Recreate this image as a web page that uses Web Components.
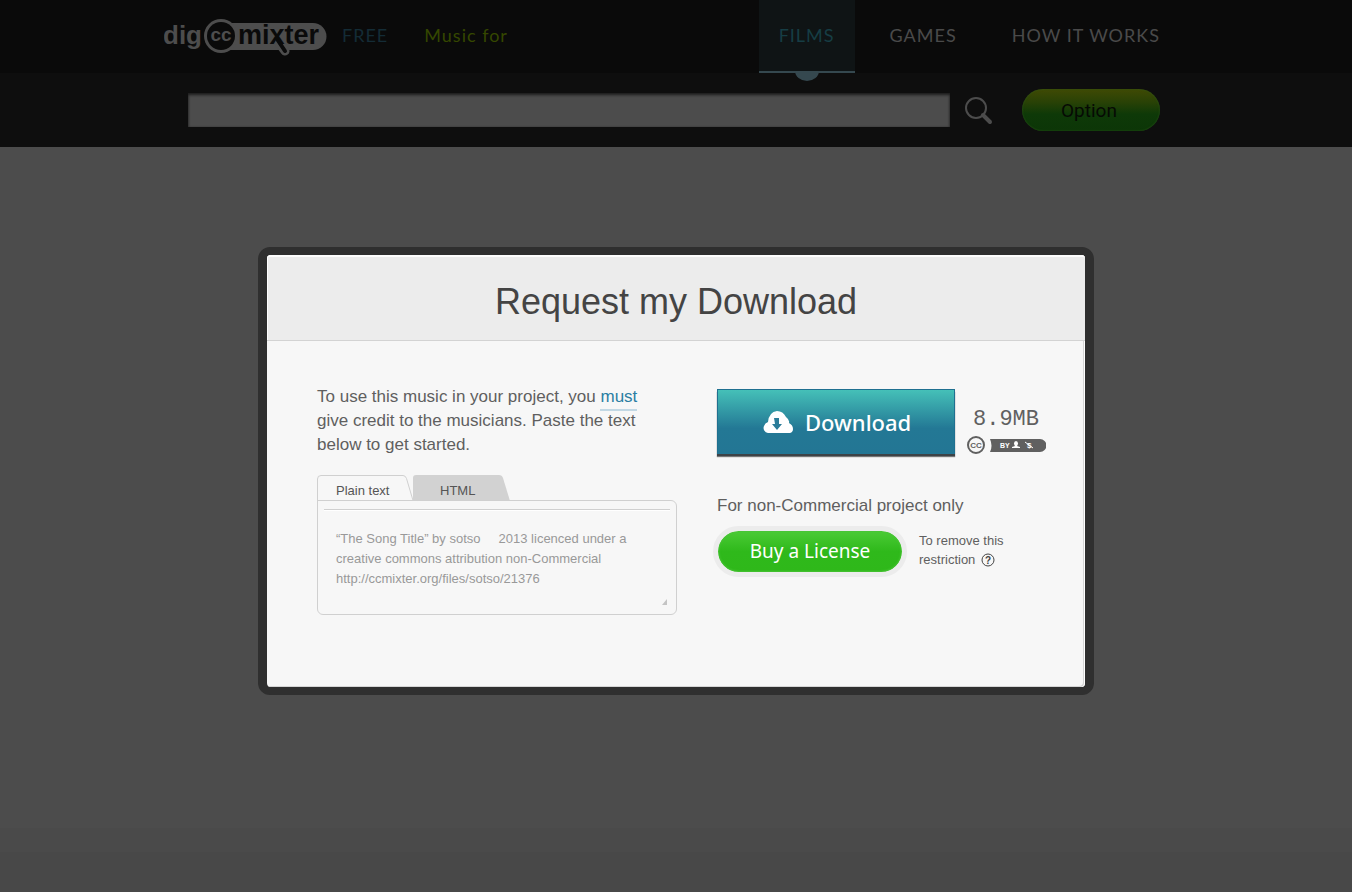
<!DOCTYPE html>
<html lang="en">
<head>
<meta charset="utf-8">
<meta name="viewport" content="width=device-width, initial-scale=1">
<title>dig ccMixter</title>
<style>
html,body{margin:0}
body{min-height:100vh;display:flex;flex-direction:column;background:#4c4c4c;color:#5f5f5f;font-family:"Liberation Sans",Arial,sans-serif}
main{flex:1;display:flex;flex-direction:column;align-items:center;padding:100px 16px 0}
</style>
</head>
<body>
<site-header>
  <site-logo slot="brand"></site-logo>
  <span slot="free">FREE</span>
  <span slot="purpose">Music for</span>
  <nav-item slot="nav" href="#films" active>FILMS</nav-item>
  <nav-item slot="nav" href="#games">GAMES</nav-item>
  <nav-item slot="nav" href="#how">HOW IT WORKS</nav-item>
</site-header>
<search-bar></search-bar>
<main>
  <modal-card>
    <span slot="title">Request my Download</span>
    <credit-panel slot="left"></credit-panel>
    <download-panel slot="right"></download-panel>
  </modal-card>
</main>
<site-footer></site-footer>
<script>
const define=(name,html,setup)=>{
  const t=document.createElement('template');
  t.innerHTML=html;
  customElements.define(name,class extends HTMLElement{
    constructor(){super();this.attachShadow({mode:'open'}).append(t.content.cloneNode(true));}
    connectedCallback(){if(setup)setup(this,this.shadowRoot);}
  });
};

define('site-logo',`<style>
:host{display:block;width:163px;height:38px;letter-spacing:normal}
a{display:block}svg{display:block}
text{font-family:"Liberation Sans",Arial,sans-serif;font-weight:700}
</style>
<a href="#home" aria-label="dig ccMixter"><svg width="163" height="38" viewBox="0 0 163 38">
<path d="M56 5H149a13 13 0 0 1 0 27H56z" fill="#4d4d4d"/>
<circle cx="57" cy="18" r="17" fill="#4d4d4d"/><circle cx="57" cy="18" r="14" fill="#0a0a0a"/>
<path d="M115 25l6 8" stroke="#4d4d4d" stroke-width="9" stroke-linecap="round"/>
<path d="M113 21l8 12" stroke="#0a0a0a" stroke-width="4" stroke-linecap="round"/>
<text x="-1" y="26" font-size="26" fill="#4d4d4d">dig</text>
<text x="57" y="23" font-size="19" text-anchor="middle" fill="#4d4d4d">cc</text>
<text x="74" y="26" font-size="27" fill="#0a0a0a">mixter</text>
</svg></a>`);

define('nav-item',`<style>
:host{display:block;font:18px/24px Lato,sans-serif;letter-spacing:1px}
a{position:relative;box-sizing:border-box;display:block;height:73px;padding:23px 20px 0;color:#4a4a4a;text-decoration:none}
:host([active]) a{background:#0f1415;border-bottom:2px solid #35484f;color:#163d44}
:host([active]) a::after{content:"";position:absolute;left:50%;top:71px;width:24px;height:10px;margin-left:-12px;background:#35484f;border-radius:0 0 12px 12px/0 0 10px 10px}
</style><a><slot></slot></a>`,(h,r)=>{r.querySelector('a').href=h.getAttribute('href');if(h.hasAttribute('active'))r.querySelector('a').setAttribute('aria-current','page')});

define('site-header',`<style>
:host{display:block;background:#0a0a0a;font:18px/24px Lato,sans-serif;letter-spacing:1px}
header{box-sizing:border-box;max-width:1024px;height:73px;margin:auto;padding-right:8px;display:flex;align-items:flex-start}
.brand{padding-top:18px;margin-right:15px}
.free{padding-top:23px;color:#142c36;margin-right:36px}
.purpose{padding-top:23px;color:#354700}
nav{display:flex;gap:15px;margin-left:auto}
</style><header><div class="brand"><slot name="brand"></slot></div><div class="free"><slot name="free"></slot></div><div class="purpose"><slot name="purpose"></slot></div><nav><slot name="nav"></slot></nav></header>`);

define('search-bar',`<style>
:host{display:block;background:#0e0e0e}
form{box-sizing:border-box;max-width:1024px;height:74px;margin:auto;padding:16px 28px 0 24px;display:flex;align-items:flex-start}
.field{flex:1;min-width:0;box-sizing:border-box;height:34px;margin-top:4px;padding:0 10px;border:0;background:#4c4c4c;box-shadow:inset 0 2px 3px #1c1c1c,inset 0 0 2px #333;color:#111;font:18px "Liberation Sans",sans-serif}
.go{margin:6px 28px 0 14px;padding:0;width:30px;height:30px;border:0;background:none}
.go svg{display:block}
.option{width:138px;height:42px;border:0;border-radius:21px;padding:0 4px 0 0;background:linear-gradient(#404a04,#2a4206 30%,#0e3908 60%,#0c3607);box-shadow:inset 0 0 2px #2c5a1a;color:#060a04;font:19px Roboto,"Liberation Sans",sans-serif}
</style><form role="search"><input class="field" type="search" aria-label="Search music">
<button class="go" type="button" aria-label="Search"><svg width="30" height="30" viewBox="0 0 30 30" fill="none" stroke="#4c4c4c"><circle cx="12" cy="13" r="10" stroke-width="2"/><path d="M19 20l7 7" stroke-width="4" stroke-linecap="round"/></svg></button>
<button class="option" type="button">Option</button></form>`);

define('modal-card',`<style>
:host{display:block;box-sizing:border-box;width:100%;max-width:836px;border:solid #2f2f2f;border-width:8px 9px;border-radius:12px;background:#2f2f2f}
section{box-sizing:border-box;min-height:432px;background:#f7f7f7;border-radius:4px;box-shadow:inset -1px 0 #fff,inset -2px -1px #d5d5d5;overflow:hidden}
h2{margin:0;box-sizing:border-box;height:86px;padding-top:26px;background:#ececec;border-bottom:1px solid #d3d3d3;box-shadow:inset 0 2px #fdfdfd,inset 1px 0 #fff;text-align:center;color:#444;font-size:36px;line-height:42px;font-weight:400}
.body{display:flex;gap:40px;padding:44px 36px 71px 50px}
.left{flex:0 1 360px;min-width:0}.right{flex:1}
</style><section role="dialog" aria-labelledby="t"><h2 id="t"><slot name="title"></slot></h2><div class="body"><div class="left"><slot name="left"></slot></div><div class="right"><slot name="right"></slot></div></div></section>`);

define('credit-panel',`<style>
:host{display:block}
p{margin:0 0 18px;max-width:330px;font-size:17px;line-height:24px;color:#5f5f5f}
p a{color:#2b7ea3;text-decoration:none;padding-bottom:3px;border-bottom:2px solid #c2d8e4}
.tabs{position:relative;display:flex;height:26px;margin-bottom:-1px}
.tabs svg{position:absolute;left:0;top:0}
button{position:relative;border:0;background:none;padding:5px 0 0 19px;text-align:left;height:26px;font:13px "Liberation Sans",sans-serif;color:#555}
.one{width:96px}.two{width:97px;padding-left:27px}
.box{box-sizing:border-box;position:relative;border:1px solid #d0d0d0;border-radius:0 6px 6px 6px;padding:8px 6px 6px;height:115px}
.box::before{content:"";display:block;border-top:1px solid #d0d0d0;border-bottom:1px solid #fff}
textarea{display:block;box-sizing:border-box;width:100%;height:88px;padding:18px 10px 0 12px;border:0;background:none;resize:none;overflow:hidden;color:#999;font:13px/20px "Liberation Sans",sans-serif}
.grip{position:absolute;right:9px;bottom:9px}
</style>
<p>To use this music in your project, you <a href="#must">must</a> give credit to the musicians. Paste the text below to get started.</p>
<div class="tabs" role="tablist"><svg width="194" height="27" viewBox="0 0 194 27"><path d="M96 26V3a3 3 0 0 1 3-3h83q3 0 4 3l7 23z" fill="#d2d2d2"/><path d="M.5 27V4q0-3.500 3.500-3.500h82q2.500 0 3.500 3l6.500 22H194" fill="#f7f7f7" stroke="#d0d0d0"/></svg>
<button class="one" role="tab" aria-selected="true">Plain text</button><button class="two" role="tab" aria-selected="false">HTML</button></div>
<div class="box"><textarea aria-label="Credit text" readonly>“The Song Title” by sotso     2013 licenced under a
creative commons attribution non-Commercial
http://ccmixter.org/files/sotso/21376</textarea><svg class="grip" width="5" height="6"><path d="M5 0V6H0z" fill="#c4c4c4"/></svg></div>`);

define('cc-badge',`<style>
:host{display:flex;align-items:center;gap:5px;height:18px}
svg{display:block}text{font-family:"Liberation Sans",sans-serif;font-weight:700}
</style><svg width="18" height="18"><circle cx="9" cy="9" r="8" fill="none" stroke="#606060" stroke-width="2"/><text x="9" y="12" text-anchor="middle" font-size="8" fill="#606060">CC</text></svg>
<svg width="56" height="13" viewBox="0 0 56 13"><path d="M0 0h50a6 6 0 0 1 0 13H0q3-6 0-13z" fill="#606060"/><text x="10" y="9" font-size="7" fill="#fff">BY</text><g fill="#fff"><ellipse cx="26" cy="4.500" rx="2" ry="2.500"/><path d="M25 6h2v1l3 1v1h-8V8l3-1z"/></g><text x="37" y="9" font-size="8" fill="#fff">$</text><path d="M35 3l8 6" stroke="#fff"/></svg>`);

define('download-panel',`<style>
:host{display:block}
.row{display:flex;align-items:flex-start}
.dl{box-sizing:border-box;width:238px;height:65px;margin-top:4px;padding:0 0 1px 45px;border:1px solid #1f7090;border-bottom:0;background:linear-gradient(#45c0b8,#237895 60%,#237694);box-shadow:0 2px #3d4347,0 3px 1px #777;display:flex;align-items:center;gap:12px;color:#fff;font:500 22px "Noto Sans","Liberation Sans",sans-serif}
.meta{margin:23px 0 0 12px}
.size{font:22px/24px "Liberation Mono",monospace;color:#606060;margin-left:6px}
cc-badge{margin-top:4px}
p{margin:40px 0 8px;font-size:17px;line-height:24px}
.buy{box-sizing:border-box;width:194px;height:51px;padding:0 0 2px;margin-left:-4px;border:5px solid #ececec;border-radius:26px;background:linear-gradient(#4bcb36,#2fb91b 50%,#2fb81a) padding-box;box-shadow:inset 0 0 2px 1px #49c436;color:#fff;font:19px "Noto Sans","Liberation Sans",sans-serif}
.note{margin:5px 0 0 12px;font-size:13px;line-height:19px;color:#606060}
.note a{display:inline-block;vertical-align:-3px;margin-left:2px;height:14px}
.note svg,.dl svg{display:block}
text{font-family:"Liberation Sans",sans-serif;font-weight:700}
</style>
<div class="row"><button class="dl"><svg width="30" height="24" viewBox="0 0 30 24"><path d="M5 23a5 5 0 0 1-4-7q1-3 4-4 1-10 9-11 6 0 9 6 4 3 3 6 4 2 4 6 0 3-3 4z" fill="#fff"/><path d="M11 8h5v6h3l-5 6-5-6h3z" fill="#2b7c99"/></svg><span>Download</span></button>
<div class="meta"><div class="size">8.9MB</div><cc-badge></cc-badge></div></div>
<p>For non-Commercial project only</p>
<div class="row"><button class="buy">Buy a License</button><div class="note">To remove this<br>restriction <a href="#help" aria-label="About this restriction"><svg width="14" height="14"><circle cx="7" cy="7" r="6" fill="none" stroke="#444"/><text x="7" y="11" text-anchor="middle" font-size="10" fill="#444">?</text></svg></a></div></div>`);

define('site-footer',`<style>:host{display:block}footer{height:64px;background:linear-gradient(#4a4a4a 0 24px,#484848 24px)}</style><footer></footer>`);
</script>
</body>
</html>
